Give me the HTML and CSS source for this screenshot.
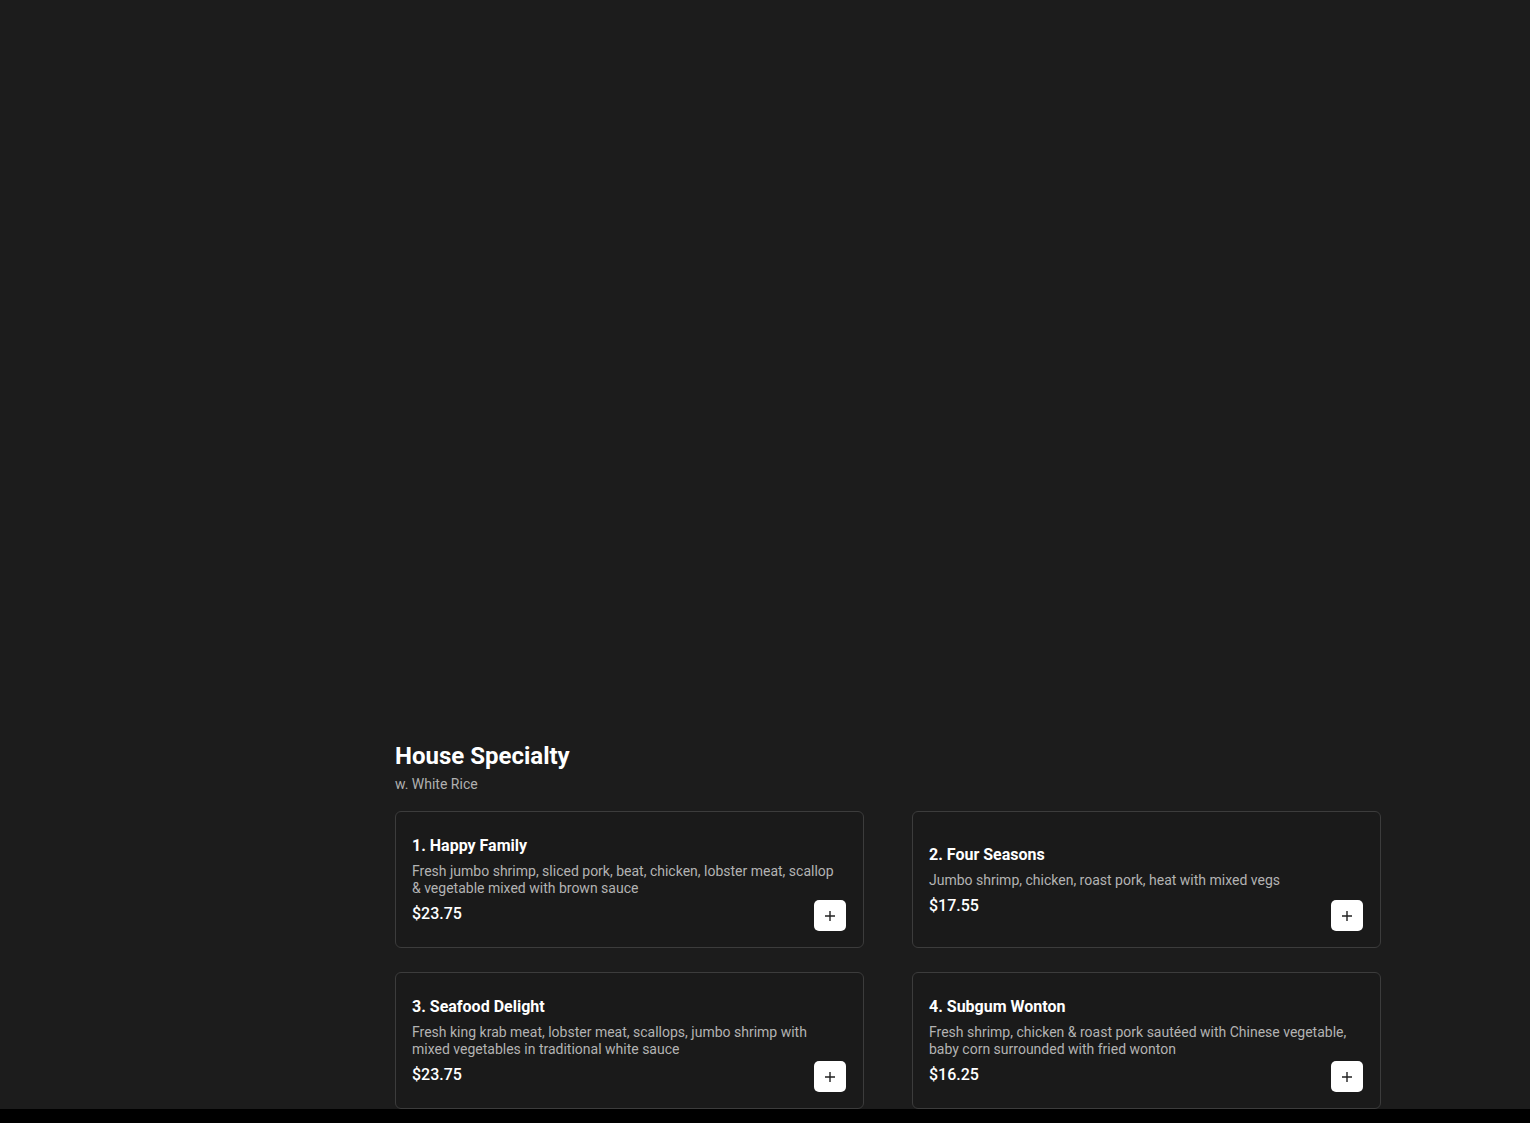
FILE: index.html
```html
<!DOCTYPE html>
<html lang="en">
<head>
<meta charset="utf-8">
<title>House Specialty</title>
<link rel="stylesheet" href="styles.css">
</head>
<body>
<div class="page">
  <aside class="side"></aside>
  <main class="main">
    <div class="hero"></div>
    <section class="section">
      <h2 class="section-title">House Specialty</h2>
      <p class="section-sub">w. White Rice</p>
      <div class="grid">
        <article class="card">
          <div class="card-body">
            <h3 class="item-name">1. Happy Family</h3>
            <p class="item-desc">Fresh jumbo shrimp, sliced pork, beat, chicken, lobster meat, scallop &amp; vegetable mixed with brown sauce</p>
            <div class="item-price">$23.75</div>
          </div>
          <button class="add" aria-label="Add"><svg width="12" height="12" viewBox="0 0 12 12"><path d="M6 1v10M1 6h10" stroke="#222" stroke-width="1.4" fill="none"/></svg></button>
        </article>
        <article class="card">
          <div class="card-body">
            <h3 class="item-name">2. Four Seasons</h3>
            <p class="item-desc">Jumbo shrimp, chicken, roast pork, heat with mixed vegs</p>
            <div class="item-price">$17.55</div>
          </div>
          <button class="add" aria-label="Add"><svg width="12" height="12" viewBox="0 0 12 12"><path d="M6 1v10M1 6h10" stroke="#222" stroke-width="1.4" fill="none"/></svg></button>
        </article>
        <article class="card">
          <div class="card-body">
            <h3 class="item-name">3. Seafood Delight</h3>
            <p class="item-desc">Fresh king krab meat, lobster meat, scallops, jumbo shrimp with mixed vegetables in traditional white sauce</p>
            <div class="item-price">$23.75</div>
          </div>
          <button class="add" aria-label="Add"><svg width="12" height="12" viewBox="0 0 12 12"><path d="M6 1v10M1 6h10" stroke="#222" stroke-width="1.4" fill="none"/></svg></button>
        </article>
        <article class="card">
          <div class="card-body">
            <h3 class="item-name">4. Subgum Wonton</h3>
            <p class="item-desc">Fresh shrimp, chicken &amp; roast pork sautéed with Chinese vegetable, baby corn surrounded with fried wonton</p>
            <div class="item-price">$16.25</div>
          </div>
          <button class="add" aria-label="Add"><svg width="12" height="12" viewBox="0 0 12 12"><path d="M6 1v10M1 6h10" stroke="#222" stroke-width="1.4" fill="none"/></svg></button>
        </article>
      </div>
    </section>
  </main>
</div>
<div class="bottom-bar"></div>
</body>
</html>
```

FILE: styles.css
```css
* { box-sizing: border-box; }
html, body {
  margin: 0;
  padding: 0;
  background: #1c1c1c;
  font-family: Roboto, "Liberation Sans", Arial, sans-serif;
  color: #fff;
}
.page {
  display: flex;
}
.side {
  width: 347px;
  flex: 0 0 347px;
}
.main {
  flex: 1;
  padding: 0 48px;
}
.hero {
  height: 740px;
}
.section {
  max-width: 986px;
}
.section-title {
  margin: 0;
  font-size: 24px;
  line-height: 32px;
  font-weight: 700;
  color: #fff;
}
.section-sub {
  margin: 2px 0 0;
  font-size: 14px;
  line-height: 20px;
  color: #b0b0b0;
}
.grid {
  margin-top: 17px;
  display: grid;
  grid-template-columns: 1fr 1fr;
  column-gap: 48px;
  row-gap: 24px;
}
.card {
  position: relative;
  height: 137px;
  border: 1px solid #3c3c3c;
  border-radius: 6px;
  background: #1a1a1a;
  padding: 16px;
  display: flex;
  align-items: center;
}
.card-body {
  flex: 1;
  min-width: 0;
  padding-right: 8px;
  padding-top: 1px;
}
.item-name {
  margin: 0;
  font-size: 16px;
  line-height: 24px;
  font-weight: 700;
  color: #fff;
}
.item-desc {
  margin: 5px 0 0;
  font-size: 14px;
  line-height: 17px;
  color: #b3b3b3;
}
.item-price {
  margin-top: 5px;
  font-size: 16px;
  line-height: 24px;
  font-weight: 500;
  color: #fff;
}
.add {
  position: absolute;
  right: 17px;
  bottom: 16px;
  width: 32px;
  height: 31px;
  border: none;
  border-radius: 5px;
  background: #fff;
  padding: 0;
  display: flex;
  align-items: center;
  justify-content: center;
  cursor: pointer;
}
.bottom-bar {
  position: fixed;
  left: 0;
  right: 0;
  bottom: 0;
  height: 14px;
  background: #000;
}
```
